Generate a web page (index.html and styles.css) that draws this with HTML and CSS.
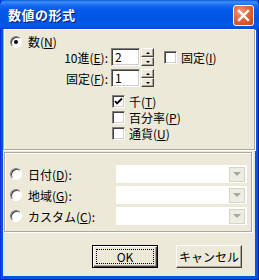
FILE: index.html
```html
<!DOCTYPE html>
<html lang="ja">
<head>
<meta charset="utf-8">
<link rel="stylesheet" href="styles.css">
</head>
<body>
<div class="window">
  <div class="titlebar">
    <span class="title">数値の形式</span>
    <div class="close">
      <svg width="13" height="13" viewBox="0 0 13 13"><path d="M2 2 L11 11 M11 2 L2 11" stroke="#fff" stroke-width="2.4" stroke-linecap="square"/></svg>
    </div>
  </div>
  <div class="client">
    <div class="panel top">
      <div class="radio-row">
        <span class="radio checked"></span><span class="lbl">数(<u>N</u>)</span>
      </div>
      <div class="num-row">
        <span class="num-label">10進(<u>E</u>):</span>
        <span class="field">2</span>
        <span class="spin"><span class="sb"><i class="up"></i></span><span class="sb"><i class="down"></i></span></span>
        <span class="check"></span><span class="lbl">固定(<u>I</u>)</span>
      </div>
      <div class="num-row second">
        <span class="num-label">固定(<u>F</u>):</span>
        <span class="field">1</span>
        <span class="spin"><span class="sb"><i class="up"></i></span><span class="sb"><i class="down"></i></span></span>
      </div>
      <div class="checks">
        <div class="check-row"><span class="check checked"><svg width="9" height="9" viewBox="0 0 9 9"><path d="M1 4 L3 6.5 L8 1.5" stroke="#000" stroke-width="1.8" fill="none"/></svg></span><span class="lbl">千(<u>T</u>)</span></div>
        <div class="check-row"><span class="check"></span><span class="lbl">百分率(<u>P</u>)</span></div>
        <div class="check-row"><span class="check"></span><span class="lbl">通貨(<u>U</u>)</span></div>
      </div>
    </div>
    <div class="panel bottom">
      <div class="opt-row"><span class="radio"></span><span class="lbl">日付(<u>D</u>):</span><span class="combo"><span class="dd"><i></i></span></span></div>
      <div class="opt-row"><span class="radio"></span><span class="lbl">地域(<u>G</u>):</span><span class="combo"><span class="dd"><i></i></span></span></div>
      <div class="opt-row"><span class="radio"></span><span class="lbl">カスタム(<u>C</u>):</span><span class="combo"><span class="dd"><i></i></span></span></div>
    </div>
    <div class="buttons">
      <div class="btn default"><span class="focus">OK</span></div>
      <div class="btn">キャンセル</div>
    </div>
  </div>
</div>
</body>
</html>
```

FILE: styles.css
```css
* { box-sizing: border-box; }
html, body { margin: 0; padding: 0; }
body {
  width: 259px; height: 280px; overflow: hidden;
  font-family: "Noto Sans CJK JP", "Liberation Sans", sans-serif;
  font-size: 12px; color: #000;
}
.window {
  width: 259px; height: 280px;
  background: #0054E3;
  display: flex; flex-direction: column;
  border-left: 1px solid #0831D9;
  border-right: 1px solid #001EA0;
  border-bottom: 1px solid #001EA0;
}
.titlebar {
  height: 29px; flex: none;
  margin: 0 -1px;
  background: linear-gradient(to bottom, #0A5AD8 0, #3D8FF8 2px, #1C6CF2 5px, #0458E8 10px, #0054E3 20px, #0059EC 26px, #0048CC 29px);
  display: flex; align-items: center; justify-content: space-between;
  padding: 0 5px 0 8px;
  border-radius: 6px 6px 0 0;
}
.title {
  color: #fff; font-weight: bold; font-size: 13px;
  text-shadow: 1px 1px 0 #0A1883;
  letter-spacing: 0.5px;
}
.close {
  width: 21px; height: 21px; margin-top: 1px;
  border: 1px solid #fff; border-radius: 3px;
  background: radial-gradient(circle at 35% 30%, #F09A7E 0, #E2643E 45%, #C7401A 100%);
  display: flex; align-items: center; justify-content: center;
}
.client {
  flex: 1;
  margin: 0 3px 3px 2px;
  background: #ECE9D8;
  display: flex; flex-direction: column;
}
.panel {
  border: 1px solid #ACA899;
  box-shadow: inset 1px 1px 0 #fff, 1px 1px 0 #fff;
}
.panel.top {
  height: 121px; border-top: none;
  padding: 6px 0 0 0;
}
.radio-row { display: flex; align-items: center; height: 13px; padding-left: 6px; }
.radio {
  width: 12px; height: 12px; flex: none; border-radius: 50%;
  background: #fff;
  border: 1px solid; border-color: #808080 #fff #fff #808080;
  box-shadow: inset 1px 1px 0 #404040, 0 0 0 0 transparent;
  position: relative;
}
.radio.checked::after {
  content: ""; position: absolute; left: 3px; top: 3px;
  width: 4px; height: 4px; border-radius: 50%; background: #000;
}
.lbl { margin-left: 6px; white-space: nowrap; line-height: 13px; }
.num-row { display: flex; align-items: center; height: 18px; margin-top: 0; }
.num-row.second { margin-top: 3px; }
.num-label { width: 104px; text-align: right; padding-right: 0; white-space: nowrap; }
.field {
  margin-left: 3px; width: 29px; height: 18px;
  background: #fff;
  border: 1px solid; border-color: #808080 #fff #fff #808080;
  box-shadow: inset 1px 1px 0 #404040, inset -1px -1px 0 #D4D0C8;
  padding: 1px 0 0 3px; line-height: 14px;
}
.spin { margin-left: 1px; width: 13px; height: 18px; display: flex; flex-direction: column; }
.sb {
  flex: 1; background: #ECE9D8;
  border: 1px solid; border-color: #fff #404040 #404040 #fff;
  box-shadow: inset -1px -1px 0 #ACA899;
  display: flex; align-items: center; justify-content: center;
}
.sb i { width: 0; height: 0; border-left: 2px solid transparent; border-right: 2px solid transparent; }
.sb i.up { border-bottom: 2px solid #000; }
.sb i.down { border-top: 2px solid #000; }
.check {
  width: 13px; height: 13px; flex: none; background: #fff;
  border: 1px solid; border-color: #808080 #fff #fff #808080;
  box-shadow: inset 1px 1px 0 #404040, inset -1px -1px 0 #D4D0C8;
  display: flex; align-items: center; justify-content: center;
}
.num-row .check { margin-left: 10px; }
.num-row .lbl { margin-left: 4px; }
.checks { margin-top: 6px; padding-left: 108px; }
.check-row { display: flex; align-items: center; height: 16px; }
.check-row .lbl { margin-left: 4px; }
.panel.bottom {
  margin: 2px 0 0 1px; width: 248px; height: 80px;
  padding: 12px 4px 0 5px;
  display: flex; flex-direction: column; gap: 3px;
}
.opt-row { display: flex; align-items: center; height: 18px; }
.opt-row .lbl { flex: 1; }
.combo {
  width: 131px; height: 18px; background: #fff;
  display: flex; justify-content: flex-end; align-items: center; padding-right: 2px;
}
.dd {
  width: 16px; height: 15px; background: #EEEDE5;
  border: 1px solid #D6D3C7;
  display: flex; align-items: center; justify-content: center;
}
.dd i { width: 0; height: 0; border-left: 4px solid transparent; border-right: 4px solid transparent; border-top: 4px solid #ACA899; }
.buttons {
  margin-top: 13px; display: flex; justify-content: flex-end; gap: 18px; padding-right: 13px;
}
.btn {
  width: 66px; height: 23px;
  background: #ECE9D8;
  border: 1px solid; border-color: #fff #404040 #404040 #fff;
  box-shadow: inset -1px -1px 0 #ACA899;
  display: flex; align-items: center; justify-content: center;
  line-height: 14px;
}
.btn.default {
  border: 1px solid #000;
  box-shadow: inset 1px 1px 0 #fff, inset -1px -1px 0 #404040, inset -2px -2px 0 #ACA899;
  padding: 3px;
}
.focus {
  flex: 1; align-self: stretch;
  border: 1px dotted #000;
  display: flex; align-items: center; justify-content: center;
}
```
